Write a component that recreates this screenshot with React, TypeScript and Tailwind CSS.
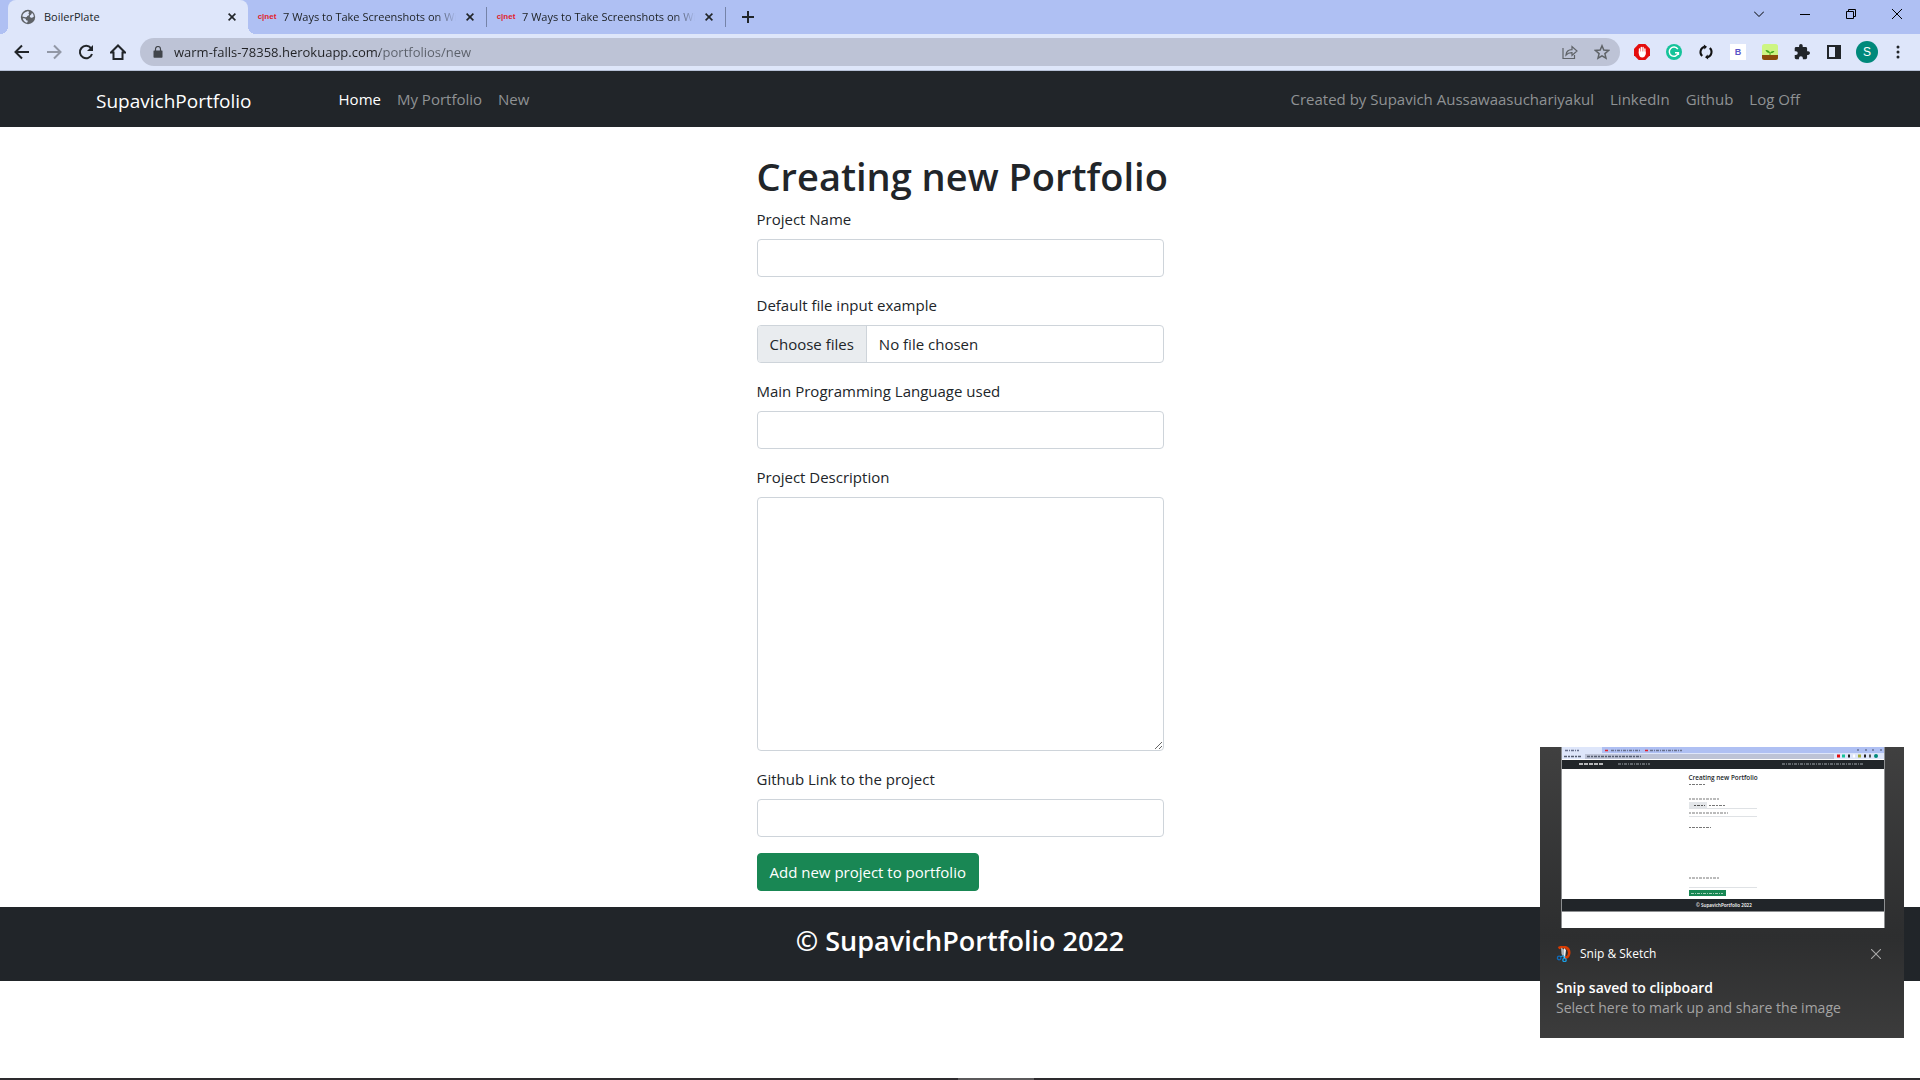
import type { ReactNode } from 'react';

type IconProps = { className?: string };

function CloseIcon({ className = '' }: IconProps) {
  return (
    <svg viewBox="0 0 8 8" className={className} fill="none" stroke="currentColor" strokeWidth="1.6" aria-hidden="true">
      <path d="M.6.6l6.8 6.8M7.4.6L.6 7.4" />
    </svg>
  );
}

function GlobeIcon() {
  return (
    <svg viewBox="0 0 16 16" className="size-4 shrink-0" aria-hidden="true">
      <circle cx="8" cy="8" r="7.2" fill="#5f6368" />
      <path d="M7 2.500C9 2 9.500 3 8.500 4.200 8 5 9.500 5 9 6 8.500 7 7 6.500 7 7.800 6.500 8.500 4.500 8 2.300 7.500 2.500 5 4.500 3 7 2.500zM2.800 9.500C5 9 6.200 10 6 11.200L7.500 11.500C8 12.500 7.500 13.200 7 13.800 5 13.300 3.300 11.500 2.800 9.500zM11.500 4.500L12.500 4.200C13.300 5.200 13.800 6.500 13.800 7.800L12 8.800C11 8.800 10 8.500 9.800 7.500 9.800 6 11.500 6 11.500 4.500z" fill="#dee6fa" />
    </svg>
  );
}

function CnetIcon() {
  return (
    <span className="flex h-4 w-4 shrink-0 items-center justify-center font-['Liberation_Sans_Narrow','Liberation_Sans'] text-[8px] leading-4 font-bold text-[#e0202b]">
      c|net
    </span>
  );
}

function Tab({ title, active = false, icon }: { title: string; active?: boolean; icon: ReactNode }) {
  return (
    <div
      className={
        active
          ? 'relative flex h-full w-60 items-center rounded-t-lg bg-[#dee6fa] pr-3 pl-3'
          : 'flex h-full w-[239px] items-center pl-[11px]'
      }
    >
      {active && (
        <>
          <span className="absolute bottom-0 -left-2 size-2 bg-[radial-gradient(circle_at_0_0,#afc0f3_8px,#dee6fa_8px)]" />
          <span className="absolute -right-2 bottom-0 size-2 bg-[radial-gradient(circle_at_100%_0,#afc0f3_8px,#dee6fa_8px)]" />
        </>
      )}
      {icon}
      <span
        className={
          active
            ? 'ml-2 flex-1 text-[11px]'
            : 'ml-2 flex-1 overflow-hidden mask-r-from-88% text-[11px] whitespace-nowrap'
        }
      >
        {title}
      </span>
      <button type="button" aria-label={`Close ${title}`} className={active ? 'p-0' : 'pr-3 pl-2.5'}>
        <CloseIcon className="size-2" />
      </button>
      {!active && <span className="h-5 w-px bg-[#7583a8]" />}
    </div>
  );
}

function TabStrip() {
  return (
    <div className="flex h-[34px] items-center bg-[#afc0f3] pl-2">
      <Tab title="BoilerPlate" active icon={<GlobeIcon />} />
      <Tab title="7 Ways to Take Screenshots on Wi" icon={<CnetIcon />} />
      <Tab title="7 Ways to Take Screenshots on Wi" icon={<CnetIcon />} />
      <button type="button" aria-label="New tab" className="ml-4">
        <svg viewBox="0 0 12 12" className="size-3" stroke="currentColor" strokeWidth="2">
          <path d="M6 0v12M0 6h12" />
        </svg>
      </button>
      <div className="mr-[18px] mb-1.5 ml-auto flex items-center gap-9 text-black">
        <button type="button" aria-label="Search tabs">
          <svg viewBox="0 0 10 10" className="size-2.5" fill="none" stroke="currentColor">
            <path d="M0 2.500l5 5 5-5" />
          </svg>
        </button>
        <button type="button" aria-label="Minimize">
          <svg viewBox="0 0 10 10" className="size-2.5" stroke="currentColor">
            <path d="M0 5.500h10" />
          </svg>
        </button>
        <button type="button" aria-label="Restore">
          <svg viewBox="0 0 10 10" className="size-2.5" fill="none" stroke="currentColor">
            <path d="M.5 2.500h7v7h-7zM2.500 2.500v-2h7v7h-2" />
          </svg>
        </button>
        <button type="button" aria-label="Close window">
          <svg viewBox="0 0 10 10" className="size-2.5" stroke="currentColor">
            <path d="M0 0l10 10M10 0L0 10" />
          </svg>
        </button>
      </div>
    </div>
  );
}

function Toolbar() {
  return (
    <div className="flex h-[37px] items-center gap-4 border-b border-[#b6c0d6] bg-[#dee6fa] pr-[18px] pl-3.5">
      <button type="button" aria-label="Back">
        <svg viewBox="0 0 16 16" className="size-4" fill="none" stroke="currentColor" strokeWidth="2">
          <path d="M15 8H2.500M8 1.500L1.500 8 8 14.500" />
        </svg>
      </button>
      <button type="button" aria-label="Forward" className="text-[#9298a6]">
        <svg viewBox="0 0 16 16" className="size-4" fill="none" stroke="currentColor" strokeWidth="2">
          <path d="M1 8h12.500M8 1.500L14.500 8 8 14.500" />
        </svg>
      </button>
      <button type="button" aria-label="Reload">
        <svg viewBox="0 0 16 16" className="size-4" fill="none" stroke="currentColor" strokeWidth="2">
          <path d="M13 4.200A6.200 6.200 0 1 0 14 10" />
          <path d="M15 1v6H9z" fill="currentColor" stroke="none" />
        </svg>
      </button>
      <button type="button" aria-label="Home">
        <svg viewBox="0 0 16 16" className="size-4" fill="none" stroke="currentColor" strokeWidth="2">
          <path d="M1 8.500h2.500V15h9V8.500H15L8 1.500z" />
        </svg>
      </button>
      <div className="-ml-0.5 flex h-7 flex-1 items-center rounded-full bg-[#bdc3d6] pr-2.5 pl-3 text-[#5f6368]">
        <svg viewBox="0 0 12 12" className="size-3" aria-hidden="true">
          <path d="M2 4.500h8q.5 0 .5.500v6q0 .8-.8.8H2.300q-.8 0-.8-.8V5q0-.5.5-.5z" fill="#41454b" />
          <path d="M3.500 5V3a2.500 2.500 0 0 1 5 0v2" fill="none" stroke="#41454b" strokeWidth="1.200" />
        </svg>
        <input
          type="text"
          aria-label="Address"
          defaultValue="warm-falls-78358.herokuapp.com/portfolios/new"
          className="ml-2.5 flex-1 bg-linear-to-r from-[#202124] from-[206px] to-[#5a5f69] to-[206px] bg-clip-text text-[13px] text-transparent outline-none"
        />
        <button type="button" aria-label="Share">
          <svg viewBox="0 0 16 16" className="size-4" fill="none" stroke="currentColor" strokeWidth="1.200">
            <path d="M1 4v10.500h11.500V11M4 11c.3-3.500 2.500-5.200 6-5.300V2.500L15 7l-5 4.500V8.700C7.500 8.600 5.500 9.300 4 11z" />
          </svg>
        </button>
        <button type="button" aria-label="Bookmark" className="ml-4">
          <svg viewBox="0 0 16 16" className="size-4" fill="none" stroke="currentColor" strokeWidth="1.500">
            <path d="M8 1.800l1.800 4.300 4.700.4-3.600 3.100 1.100 4.600L8 11.800l-4 2.400 1.100-4.600-3.600-3.100 4.700-.4z" />
          </svg>
        </button>
      </div>
      <div className="-ml-0.5 flex items-center gap-4">
        <button type="button" aria-label="Ad blocker">
          <svg viewBox="0 0 16 16" className="size-4">
            <path d="M4.700 0h6.600L16 4.700v6.600L11.300 16H4.700L0 11.300V4.700z" fill="#e40d0d" />
            <path d="M5.500 5v4M7.300 3.500v5M9.100 3.500v5M10.900 5v5" stroke="#fff" strokeWidth="1.400" strokeLinecap="round" />
            <path d="M4.800 7.500h6.800v2.500q-.6 3.500-3.400 3.500Q5.500 13.500 4.800 10z" fill="#fff" />
          </svg>
        </button>
        <button type="button" aria-label="Writing assistant">
          <svg viewBox="0 0 16 16" className="size-4" fill="none">
            <circle cx="8" cy="8" r="8" fill="#15c39a" />
            <path d="M11.800 5.200A4.600 4.600 0 1 0 12.300 9M9 8.700h3.400V11" stroke="#fff" strokeWidth="1.500" />
          </svg>
        </button>
        <button type="button" aria-label="Sync">
          <svg viewBox="0 0 16 16" className="size-4" fill="none" stroke="#111" strokeWidth="2">
            <path d="M6.500 2.800A5.400 5.400 0 0 0 4.200 12M9.500 13.200A5.400 5.400 0 0 0 11.800 4" />
            <path d="M5.800.5L9 2.800 6.400 5.500zM10.200 15.500L7 13.200l2.600-2.700z" fill="#111" stroke="none" />
          </svg>
        </button>
        <button type="button" aria-label="B extension" className="flex size-4 items-center justify-center bg-white font-['Liberation_Sans'] text-[9px] font-bold text-[#5a55c8]">
          B
        </button>
        <button type="button" aria-label="Plant extension">
          <svg viewBox="0 0 16 16" className="size-4">
            <rect width="16" height="16" rx="2.500" fill="#cdf582" />
            <path d="M0 11h16v2.500a2.500 2.500 0 0 1-2.500 2.500h-11A2.500 2.500 0 0 1 0 13.500z" fill="#8a4b0c" />
            <path d="M3.500 6q3.500-.2 4.500 2.700Q9.500 6.500 12.500 7q-1 2.300-4 2.200V11h-1V9Q4.500 9 3.500 6z" fill="#3ea31b" />
          </svg>
        </button>
        <button type="button" aria-label="Extensions">
          <svg viewBox="1 1 22 22" className="size-4" fill="currentColor">
            <path d="M20.500 11H19V7a2 2 0 0 0-2-2h-4V3.500a2.500 2.500 0 0 0-5 0V5H4a2 2 0 0 0-2 2v3.800h1.500a2.700 2.700 0 0 1 0 5.400H2V20a2 2 0 0 0 2 2h3.800v-1.500a2.700 2.700 0 0 1 5.400 0V22H17a2 2 0 0 0 2-2v-4h1.500a2.500 2.500 0 0 0 0-5z" />
          </svg>
        </button>
        <button type="button" aria-label="Side panel">
          <svg viewBox="0 0 16 16" className="size-4" fill="none" stroke="currentColor" strokeWidth="2">
            <path d="M2 2h12v12H2z" />
            <path d="M11.500 2v12" strokeWidth="5" />
          </svg>
        </button>
      </div>
      <button type="button" aria-label="Profile" className="-ml-0.5 flex size-[22px] items-center justify-center rounded-full bg-[#00897b] font-['Liberation_Sans'] text-xs text-white">
        S
      </button>
      <button type="button" aria-label="Menu">
        <svg viewBox="0 0 4 14" className="mx-0.5 h-3.5 w-1" fill="currentColor">
          <circle cx="2" cy="2" r="1.500" />
          <circle cx="2" cy="7" r="1.500" />
          <circle cx="2" cy="12" r="1.500" />
        </svg>
      </button>
    </div>
  );
}

function NavLink({ children, active = false }: { children: ReactNode; active?: boolean }) {
  return (
    <a href="#" className={active ? 'px-2 text-white' : 'px-2 text-[#8f9294]'}>
      {children}
    </a>
  );
}

function Navbar() {
  return (
    <nav className="flex h-14 items-center bg-[#212529] pr-28 pl-24">
      <a href="#" className="mr-[79px] pt-1 text-[19px] text-white">
        SupavichPortfolio
      </a>
      <div className="flex">
        <NavLink active>Home</NavLink>
        <NavLink>My Portfolio</NavLink>
        <NavLink>New</NavLink>
      </div>
      <div className="ml-auto flex">
        <NavLink>Created by Supavich Aussawaasuchariyakul</NavLink>
        <NavLink>LinkedIn</NavLink>
        <NavLink>Github</NavLink>
        <NavLink>Log Off</NavLink>
      </div>
    </nav>
  );
}

function TextField({ id, label }: { id: string; label: string }) {
  return (
    <div className="flex flex-col gap-2">
      <label htmlFor={id}>{label}</label>
      <input id={id} type="text" className="h-[38px] rounded border border-[#ced4da] px-3" />
    </div>
  );
}

function PortfolioForm() {
  return (
    <main className="mx-auto w-full max-w-[407px] pt-[25px] pb-4">
      <h1 className="mb-[7px] text-[38px] leading-[48px] font-semibold whitespace-nowrap">Creating new Portfolio</h1>
      <form className="flex flex-col gap-4">
        <TextField id="name" label="Project Name" />
        <div className="flex flex-col gap-2">
          <label htmlFor="files">Default file input example</label>
          <label className="flex h-[38px] items-stretch overflow-hidden rounded border border-[#ced4da]">
            <span className="flex items-center border-r border-[#ced4da] bg-[#e9ecef] px-3">Choose files</span>
            <span className="flex items-center px-3">No file chosen</span>
            <input id="files" type="file" multiple className="sr-only" />
          </label>
        </div>
        <TextField id="language" label="Main Programming Language used" />
        <div className="flex flex-col gap-2">
          <label htmlFor="description">Project Description</label>
          <textarea id="description" className="block h-[254px] rounded border border-[#ced4da] px-3 py-1.5" />
        </div>
        <TextField id="link" label="Github Link to the project" />
        <button type="button" className="h-[38px] self-start rounded border border-[#198754] bg-[#198754] px-3 text-white">
          Add new project to portfolio
        </button>
      </form>
    </main>
  );
}

function SnipPreview() {
  return (
    <svg viewBox="0 0 324 181" className="block w-full" role="img" aria-label="Captured page">
      <rect width="324" height="181" fill="#fff" />
      <rect width="324" height="6" fill="#afc0f3" />
      <path d="M0 0h41v6h283v6H0z" fill="#dee6fa" />
      <rect x="24" y="7" width="249" height="5" fill="#bdc3d6" />
      <rect y="13" width="324" height="9" fill="#212529" />
      <g fill="none" strokeWidth="1.500">
        <path d="M4 3.500h14M50 3.500h29M89 3.500h32" stroke="#67708d" strokeDasharray="3 1 1 1" />
        <path d="M3 9.500h18M26 9.500h54" stroke="#555d70" strokeDasharray="3 1 2 1" />
        <path d="M44 3.500h3M84 3.500h3" stroke="#e0202b" />
        <path d="M18 17h24" stroke="#e7e8e9" strokeDasharray="4 1" />
        <path d="M57 17h32M221 17h82" stroke="#777c81" strokeDasharray="3 1 1 1" />
        <path d="M128 37.500h16M128 52h30M128 66h39M128 80.500h22M128 131h30" stroke="#777" strokeDasharray="2 1 3 1" strokeWidth="1" />
        <path d="M148 58.500h16" stroke="#777" strokeDasharray="2 1 3 1" strokeWidth="1" />
        <path d="M128 61.500h68M128 69.500h68M128 140.500h68" stroke="#dfe2e5" strokeWidth="1" />
      </g>
      <rect x="276" y="7.500" width="3" height="3" fill="#e40d0d" />
      <rect x="281" y="7.500" width="3" height="3" fill="#15c39a" />
      <rect x="287" y="7.500" width="2" height="3" fill="#222" />
      <rect x="292" y="7.500" width="2" height="3" fill="#fff" />
      <rect x="297" y="7.500" width="3" height="3" fill="#a4ad3c" />
      <rect x="303" y="7.500" width="2" height="3" fill="#222" />
      <rect x="308" y="7.500" width="2" height="3" fill="#555" />
      <circle cx="315" cy="9" r="2" fill="#00897b" />
      <path d="M296 3h2M304 3h2M311 3h2M319 3h2" stroke="#444c66" />
      <text x="127.500" y="33" fontSize="6.400" fontWeight="600" fill="#212529">Creating new Portfolio</text>
      <rect x="128" y="55" width="18" height="6" fill="#e3e6e9" />
      <path d="M133 58.500h11" stroke="#555" strokeDasharray="2 1 3 1" />
      <rect x="128" y="143" width="37" height="6" fill="#198754" />
      <path d="M130 146.500h32" stroke="#a3d1b9" strokeDasharray="3 1 1 1" />
      <rect y="152" width="324" height="12" fill="#212529" />
      <text x="135" y="160" fontSize="4.600" fontWeight="600" fill="#fff">© SupavichPortfolio 2022</text>
      <path d="M.5 0v181M323.500 0v181M0 164.500h324" stroke="#8d8f91" fill="none" />
    </svg>
  );
}

function Toast() {
  return (
    <aside className="fixed right-4 bottom-[42px] h-[291px] w-[364px] bg-linear-to-b from-[#404040] via-[#2d2e2f] via-65% to-[#3c3c3c] text-white">
      <div className="mr-[19px] ml-[21px]">
        <SnipPreview />
      </div>
      <div className="mt-3.5 flex items-center pr-[23px] pl-4">
        <svg viewBox="0 0 16 16" className="size-4" fill="none" aria-hidden="true">
          <path d="M2.500 2.200C8-1 13.500 2 13.200 7c-.2 3-2 4.500-4.200 4.800" stroke="#d83b01" strokeWidth="2.600" />
          <path d="M5 1.500l3 2v8L5.500 8z" fill="#aeb4b9" />
          <path d="M8 2l2 2-1 8H8z" fill="#eceff1" />
          <circle cx="3.200" cy="12" r="1.800" stroke="#0f6cbd" strokeWidth="1.300" />
          <circle cx="8.500" cy="14" r="1.700" stroke="#1b9de2" strokeWidth="1.300" />
          <path d="M4.500 10.800L8 9.500M8 12.300V10" stroke="#1b9de2" strokeWidth="1.200" />
        </svg>
        <span className="ml-2 text-xs leading-6">Snip &amp; Sketch</span>
        <button type="button" aria-label="Dismiss" className="ml-auto text-[#a8a8a8]">
          <svg viewBox="0 0 10 10" className="size-2.5" stroke="currentColor" strokeWidth="1.100">
            <path d="M0 0l10 10M10 0L0 10" />
          </svg>
        </button>
      </div>
      <p className="mt-3 pl-4 text-sm leading-5 font-semibold">Snip saved to clipboard</p>
      <p className="pl-4 text-sm leading-5 text-[#a3a3a3]">Select here to mark up and share the image</p>
    </aside>
  );
}

export default function App() {
  return (
    <div className="flex min-h-screen flex-col bg-white font-['Open_Sans','Noto_Sans',sans-serif] text-[15px] leading-6 text-[#212529]">
      <TabStrip />
      <Toolbar />
      <Navbar />
      <PortfolioForm />
      <footer className="bg-[#212529] pt-[17px] pb-[23px] text-center text-white">
        <h2 className="text-[27px] leading-[34px] font-semibold">© SupavichPortfolio 2022</h2>
      </footer>
      <Toast />
      <div className="mt-auto flex h-0.5 justify-center bg-[#2d2b2e]">
        <span className="ml-[72px] w-[76px] bg-[#5b595b]" />
      </div>
    </div>
  );
}
